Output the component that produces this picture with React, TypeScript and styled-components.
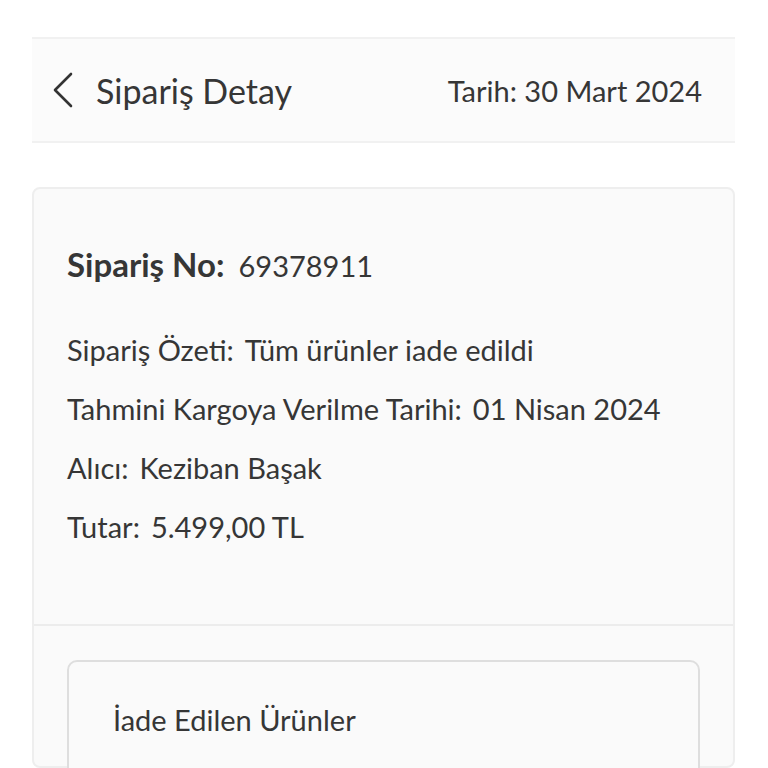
import React from 'react';
import styled, { createGlobalStyle } from 'styled-components';

const GlobalStyle = createGlobalStyle`
  html, body {
    margin: 0;
    padding: 0;
    background: #ffffff;
  }

  body {
    font-family: Lato, 'Noto Sans', sans-serif;
    color: #363636;
  }
`;

const Page = styled.div`
  display: flex;
  flex-direction: column;
  gap: 44px;
  padding: 37px 33px 0 32px;
  height: 768px;
  box-sizing: border-box;
  overflow: hidden;
`;

const Header = styled.header`
  display: flex;
  align-items: center;
  justify-content: space-between;
  height: 106px;
  padding: 0 33px 0 20px;
  background: #fbfbfb;
  border-top: 2px solid #f1f1f1;
  border-bottom: 2px solid #f1f1f1;
  box-sizing: border-box;
`;

const BackTitle = styled.div`
  display: flex;
  align-items: center;
  gap: 22px;
`;

const BackButton = styled.button`
  display: flex;
  align-items: center;
  padding: 0;
  border: 0;
  background: none;
  color: #333333;
  cursor: pointer;
`;

const Title = styled.h1`
  margin: 0;
  font-size: 34px;
  font-weight: 400;
`;

const DateText = styled.span`
  font-size: 29px;
`;

const Card = styled.section`
  display: flex;
  flex-direction: column;
  background: #fafafa;
  border: 2px solid #eeeeee;
  border-radius: 8px;
  flex: 1;
  min-height: 0;
`;

const Summary = styled.div`
  display: flex;
  flex-direction: column;
  gap: 29px;
  padding: 58px 33px 82px;
  border-bottom: 2px solid #ececec;
`;

const OrderNo = styled.div`
  display: flex;
  align-items: baseline;
  font-size: 29px;
  line-height: 34px;
  margin-bottom: 23px;

  b {
    font-size: 33px;
    font-weight: 700;
    margin-right: 14px;
  }
`;

const Row = styled.div`
  font-size: 29px;
  line-height: 30px;

  span {
    margin-right: 11px;
  }
`;

const Body = styled.div`
  padding: 34px 33px 0;
`;

const ReturnBox = styled.div`
  background: #fafafa;
  border: 2px solid #dedede;
  border-radius: 10px;
  padding: 40px 44px;
  height: 200px;
`;

const BoxTitle = styled.h2`
  margin: 0;
  font-size: 29px;
  font-weight: 400;
`;

const details = [
  { label: 'Sipariş Özeti:', value: 'Tüm ürünler iade edildi' },
  { label: 'Tahmini Kargoya Verilme Tarihi:', value: '01 Nisan 2024' },
  { label: 'Alıcı:', value: 'Keziban Başak' },
  { label: 'Tutar:', value: '5.499,00 TL' },
];

export default function App(): React.ReactElement {
  return (
    <>
      <GlobalStyle />
      <Page>
        <Header>
          <BackTitle>
            <BackButton aria-label='Geri'>
              <svg width='22' height='36' viewBox='0 0 22 36' fill='none'>
                <path d='M19 2 L3 18 L19 34' stroke='#333' strokeWidth='2.6' strokeLinecap='round' strokeLinejoin='round' />
              </svg>
            </BackButton>
            <Title>Sipariş Detay</Title>
          </BackTitle>
          <DateText>Tarih: 30 Mart 2024</DateText>
        </Header>

        <Card>
          <Summary>
            <OrderNo>
              <b>Sipariş No:</b>69378911
            </OrderNo>
            {details.map((d) => (
              <Row key={d.label}>
                <span>{d.label}</span>{d.value}
              </Row>
            ))}
          </Summary>
          <Body>
            <ReturnBox>
              <BoxTitle>İade Edilen Ürünler</BoxTitle>
            </ReturnBox>
          </Body>
        </Card>
      </Page>
    </>
  );
}
